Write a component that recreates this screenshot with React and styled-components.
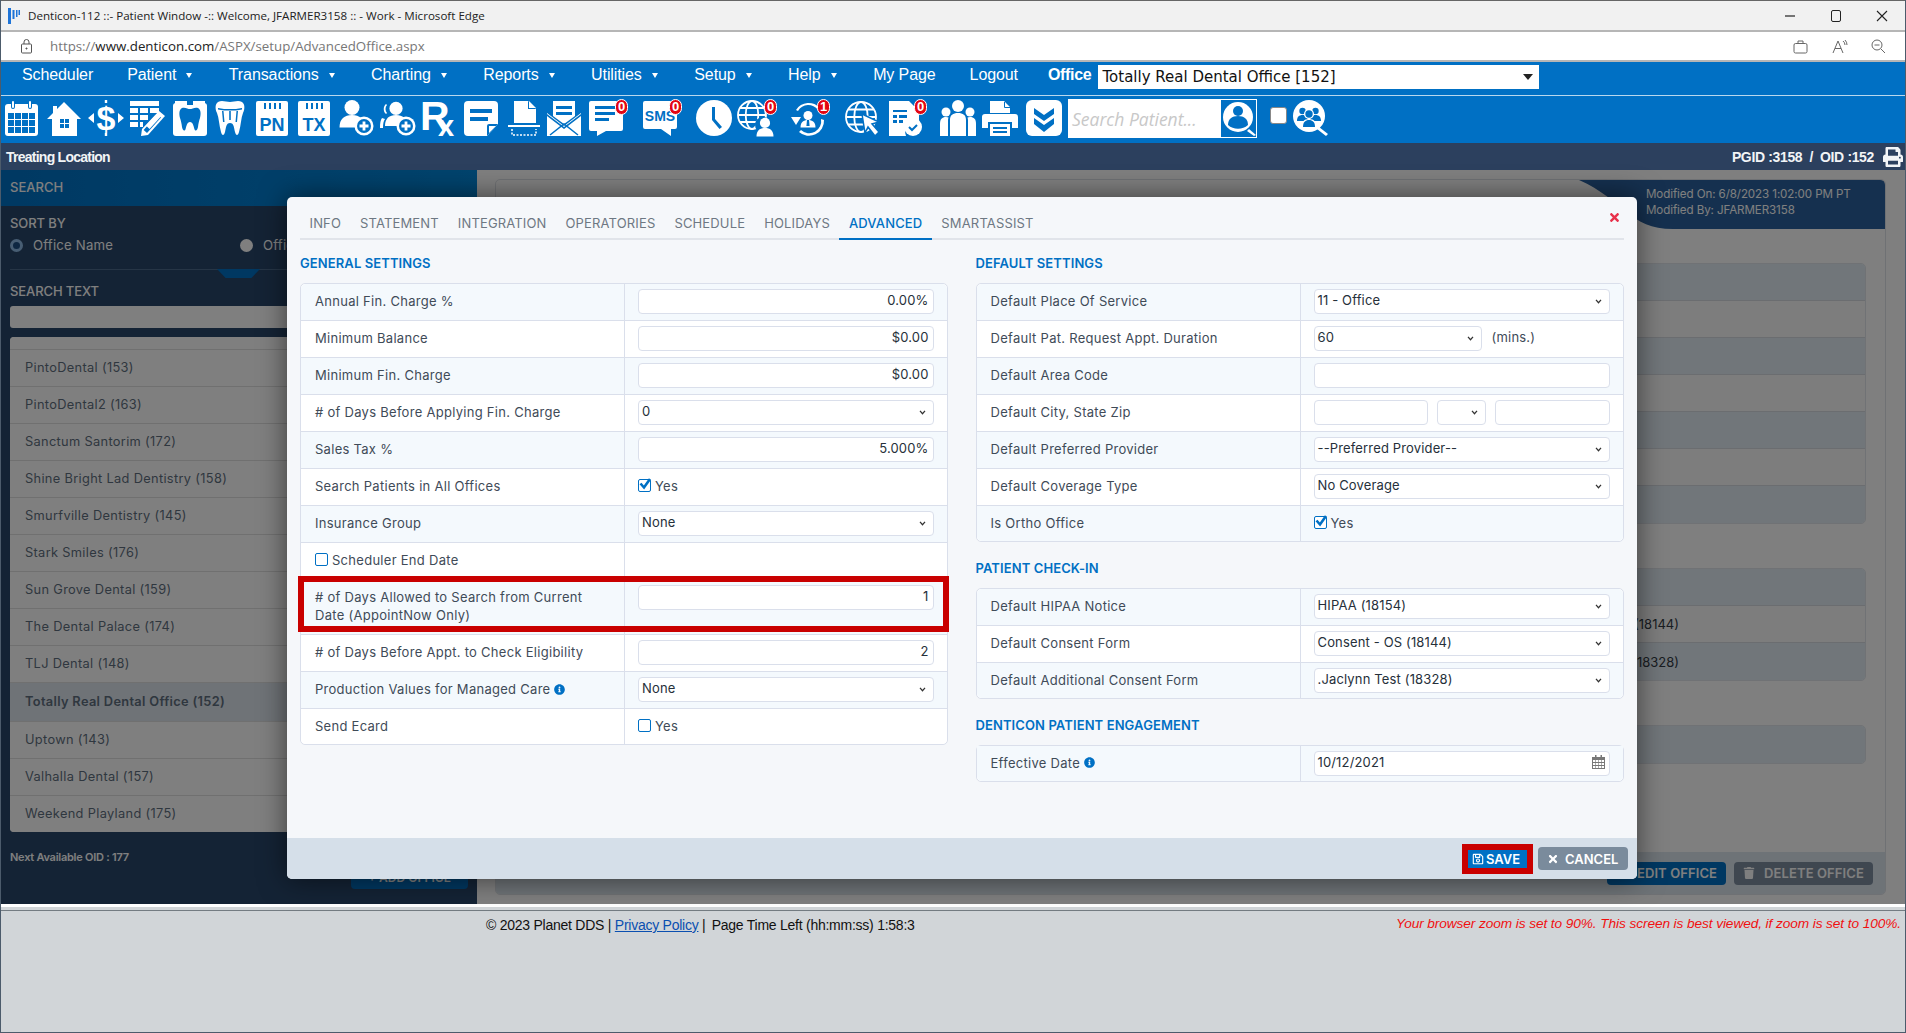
import React from 'react';
import styled, { createGlobalStyle } from 'styled-components';
import { FaInfoCircle, FaRegSave, FaTimes, FaTrash, FaPrint, FaEdit } from 'react-icons/fa';

const BLUE = '#0070c4';
const UI = '"Inter", "Noto Sans", sans-serif';
const ARIAL = '"Liberation Sans", Arial, sans-serif';

const Global = createGlobalStyle`
  html, body { margin: 0; padding: 0; background: #d1d5d8; }
  * { box-sizing: border-box; }
`;

const Page = styled.div`
  width: 1906px; height: 1033px; display: flex; flex-direction: column; overflow: hidden;
  border-left: 1px solid #4c5b6b; border-right: 1px solid #4c5b6b; border-bottom: 1px solid #4c5b6b;
  background: #d1d5d8; font-family: ${UI};
`;

/* browser chrome */
const TitleBar = styled.div`
  height: 32px; flex: none; display: flex; align-items: center; background: #f1f1f1;
  border-top: 1px solid #666; border-bottom: 2px solid #b6b6b6; padding: 0 0 0 7px;
  font: 11.6px "Open Sans", sans-serif; color: #222;
`;
const TitleText = styled.span` margin-left: 8px; flex: 1; `;
const WinBtn = styled.span` width: 46px; height: 16px; display: flex; align-items: center; justify-content: center; color: #222; `;
const AddressBar = styled.div`
  height: 30px; flex: none; display: flex; align-items: center; background: #fff;
  border-bottom: 2px solid #b6b6b6; padding-left: 19px;
  font: 13.3px "Open Sans", sans-serif; color: #777;
`;
const Url = styled.span` margin-left: 17px; flex: 1; b { font-weight: 400; color: #222; } `;
const ChromeIcon = styled.span` width: 39px; display: flex; justify-content: center; color: #666; `;
const ChromeEnd = styled.span` width: 7px; `;

/* blue menu */
const MenuBar = styled.div`
  height: 34px; flex: none; display: flex; align-items: center; background: ${BLUE};
  border-bottom: 1px solid #b9d8ee; padding: 0 0 7px 21px; font: 16px ${ARIAL}; color: #fff;
`;
const MenuItem = styled.span`
  display: flex; align-items: center; gap: 10px; margin-right: ${p => p.$mr}px; white-space: nowrap; letter-spacing: -0.1px;
`;
const Caret = styled.i`
  width: 0; height: 0; border-left: 3px solid transparent; border-right: 3px solid transparent; border-top: 5px solid #fff;
`;
const OfficeLabel = styled.b` font-size: 16px; margin-right: 7px; letter-spacing: -0.3px; `;
const OfficeSelect = styled.div`
  width: 441px; height: 24px; margin-top: 3px; background: #fff; color: #111; display: flex; align-items: center;
  justify-content: space-between; padding: 0 4px; font: 15px "DejaVu Sans", sans-serif;
`;
const OfficeCaret = styled.i`
  width: 0; height: 0; margin-right: 2px; border-left: 5px solid transparent; border-right: 5px solid transparent; border-top: 6px solid #222;
`;

/* icon toolbar */
const Toolbar = styled.div`
  height: 47px; flex: none; display: flex; align-items: flex-start; background: ${BLUE}; padding: 4px 0 0 3px;
`;
const Tool = styled.span` position: relative; width: 36px; height: 36px; flex: none; margin-left: ${p => p.$gap || 0}px; display: block; `;
const Badge = styled.span`
  position: absolute; top: -1px; right: -4px; width: 13px; height: 16px; border-radius: 7px; background: #e30613; color: #fff;
  font: bold 13px/14px ${ARIAL}; text-align: center; border: 1px solid #fff;
`;
const SearchBox = styled.div`
  width: 189px; height: 39px; margin: -1px 0 0 6px; background: #fff; display: flex; align-items: center; justify-content: space-between;
  font: italic 17.5px "Open Sans", sans-serif; color: #c8c8c8; padding-left: 4px; white-space: nowrap;
`;
const SearchBtn = styled.span` width: 37px; height: 39px; background: ${BLUE}; border: 1px solid #fff; display: block; `;
const TopCheck = styled.span` width: 17px; height: 17px; margin: 7px 6px 0 13px; background: #fff; border: 1px solid #888; border-radius: 3px; flex: none; `;

/* status */
const StatusBar = styled.div`
  height: 27px; flex: none; background: #2c405e; color: #f2f4f6; display: flex; align-items: center; justify-content: space-between;
  padding: 0 2px 0 5px; font: bold 14px ${ARIAL}; letter-spacing: -0.35px;
`;
const StatusLeft = styled.span` letter-spacing: -.75px; `;
const StatusRight = styled.div` display: flex; align-items: center; gap: 9px; `;

/* main */
const Main = styled.div` position: relative; height: 734px; flex: none; display: flex; background: #fff; `;
const Backdrop = styled.div` position: absolute; inset: 0; background: rgba(0,0,0,.5); `;

const Sidebar = styled.aside`
  width: 476px; flex: none; background: #28466a; color: #fff; display: flex; flex-direction: column;
  font-size: 13px;
`;
const SideHead = styled.div`
  height: 36px; flex: none; padding: 0 9px 3px; display: flex; align-items: center; font-weight: 500;
  background: linear-gradient(90deg, #0072c6, #0088dc); color: #fff; font-size: 13px;
`;
const SideBody = styled.div` padding: 8px 9px 0; flex: 1; display: flex; flex-direction: column; position: relative; `;
const SideLabel = styled.div`
  font-weight: 500; font-size: 13px; height: 18px; line-height: 18px; letter-spacing: -.1px; margin-top: ${p => p.$mt || 0}px;
`;
const RadioRow = styled.div` display: flex; height: 22px; align-items: center; margin-top: 2px; font-size: 13.2px; letter-spacing: .2px; `;
const Radio = styled.span`
  width: 13px; height: 13px; border-radius: 50%; flex: none; margin-right: 10px;
  background: ${p => p.$on ? '#1c4e84' : '#fff'}; border: ${p => p.$on ? '3.5px solid #8fbbe6' : 'none'};
`;
const RadioText = styled.span` width: ${p => p.$w}px; `;
const Divider = styled.div`
  position: relative; height: 1px; background: #4d6a8c; margin-top: 13px;
  &::after { content: ''; position: absolute; left: 207px; top: 0; width: 43px; height: 9px; background: ${BLUE};
    clip-path: polygon(0 0, 100% 0, 80% 100%, 20% 100%); }
`;
const SearchInput = styled.div` height: 22px; margin-top: 6px; background: #fff; border-radius: 3px; `;
const OfficeList = styled.div`
  margin-top: 9px; height: 495px; background: #fff; border-radius: 4px; overflow: hidden; color: #5f6f7f;
`;
const OfficeRow = styled.div`
  height: ${p => p.$h || 37}px; display: flex; align-items: center; padding: 0 0 2px 15px; border-bottom: 1px solid #e0e0e0; font-size: 12.8px; letter-spacing: .33px;
  background: ${p => p.$active ? '#dfe6ee' : '#fff'}; font-weight: ${p => p.$active ? 600 : 400};
`;
const NextOid = styled.div` margin-top: 18px; font-size: 11px; font-weight: 600; letter-spacing: -.25px; `;
const AddBtn = styled.div`
  position: absolute; left: 350px; bottom: 15px; width: 117px; height: 24px; border-radius: 4px; background: ${BLUE};
  color: #fff; font-size: 12px; font-weight: 600; display: flex; align-items: center; justify-content: center;
`;

const Content = styled.section` flex: 1; padding: 9px 19px 9px 18px; display: flex; `;
const Card = styled.div`
  flex: 1; position: relative; border: 1px solid #dfe3e8; border-radius: 5px; display: flex; flex-direction: column; overflow: hidden;
`;
const Banner = styled.div`
  align-self: flex-end; width: 306px; height: 49px; flex: none; background: #2a619e; color: #fff; padding: 6px 0 0 67px;
  clip-path: path("M0 0H301Q306 0 306 5V49H94C50 49 45 20 0 0Z"); font-size: 11.6px; line-height: 16px; letter-spacing: -.1px;
`;
const BackArea = styled.div` flex: 1; padding: 34px 19px 0 700px; `;
const BackTable = styled.div` border: 1px solid #e0e4ea; border-radius: 5px; margin-bottom: 44px; overflow: hidden; `;
const BackRow = styled.div`
  height: 37px; display: flex; justify-content: flex-end; align-items: center; padding-right: 186px; color: #333a44; font-size: 13px;
  border-bottom: 1px solid #d7dbe0; &:nth-child(odd) { background: #e2edf5; } &:nth-child(even) { background: #fafafa; }
  &:last-child { border-bottom: none; }
`;
const CardFoot = styled.div`
  height: 42px; flex: none; background: #dce6ef; display: flex; justify-content: flex-end; align-items: center; gap: 8px; padding-right: 12px;
`;
const BackBtn = styled.div`
  height: 23px; width: ${p => p.$w}px; border-radius: 4px; background: ${p => p.$bg}; color: #fff; display: flex; align-items: center; justify-content: center; gap: 9px;
  font-size: 13px; font-weight: 600; letter-spacing: .1px;
`;

/* modal */
const Modal = styled.div`
  position: absolute; left: 286px; top: 27px; width: 1350px; height: 682px; background: #f5f7fa; border-radius: 5px;
  box-shadow: 0 0 28px rgba(0,0,0,.55); display: flex; flex-direction: column;
`;
const Close = styled.span` position: absolute; right: 16px; top: 14px; color: #e8314a; font-size: 13px; display: flex; `;
const Tabs = styled.div`
  height: 43px; margin: 0 13px; display: flex; align-items: flex-end; border-bottom: 2px solid #e1e4ea; flex: none;
`;
const Tab = styled.div`
  height: 28px; padding: 0 9.5px 4px; margin-bottom: -2px; font-size: 13px; display: flex; align-items: center;
  letter-spacing: .15px; color: ${p => p.$on ? BLUE : '#6e7883'}; font-weight: ${p => p.$on ? 500 : 400};
  border-bottom: 2px solid ${p => p.$on ? BLUE : 'transparent'};
`;
const Body = styled.div`
  flex: 1; padding: 0 13px; display: grid; grid-template-columns: 647.5px 648.5px; gap: 28px; align-content: start;
`;
const Col = styled.div``;
const SectionTitle = styled.div`
  height: 20px; line-height: 20px; margin: ${p => p.$first ? 13 : 16}px 0 10px; color: ${BLUE}; font-weight: 600; font-size: 13px; letter-spacing: .1px;
`;
const Table = styled.div` border: 1px solid #dadfeb; border-radius: 5px; background: #fff; `;
const Row = styled.div`
  position: relative; display: grid; grid-template-columns: 323px 1fr; min-height: ${p => p.$marked ? 55 : 37}px; border-bottom: 1px solid #dadfeb;
  &:nth-child(odd) { background: #f4f9fd; } &:nth-child(even) { background: #fff; }
  &:last-child { border-bottom: none; min-height: 35px; }
  &:first-child { border-radius: 5px 5px 0 0; } &:last-child { border-radius: 0 0 5px 5px; }
  ${p => p.$marked ? `&::after { content: ''; position: absolute; top: -4px; bottom: 2px; left: -3px; right: -2px; border: 6px solid #c90000; pointer-events: none; }` : ''}
`;
const Label = styled.div`
  padding: 0 13px 2px 14px; display: flex; align-items: center; gap: 4px; font-size: 13px; color: #3f4b58; line-height: 18px; letter-spacing: .28px; white-space: nowrap;
`;
const Value = styled.div`
  border-left: 1px solid #dadfeb; padding: 5px 13px; display: flex; gap: ${p => p.$gap || 0}px; align-items: flex-start; font-size: 13px; color: #3f4b58;
`;
const Field = styled.div`
  height: 25px; flex: ${p => p.$w ? `0 0 ${p.$w}px` : 1}; background: #fff; border: 1px solid #dadfeb; border-radius: 4px; display: flex; align-items: center;
  justify-content: ${p => p.$right ? 'flex-end' : 'space-between'}; padding: 0 4px 3px 3px; color: #26303a; font-size: 13px; letter-spacing: .15px;
`;
const Chevron = styled.svg` width: 7px; height: 5px; margin: 3px 3px 0 0; flex: none; `;
const CheckWrap = styled.label` display: flex; align-items: center; gap: 4px; height: 25px; margin-top: -1px; color: #3f4b58; font-size: 13px; letter-spacing: .28px; `;
const Box = styled.span`
  position: relative; width: 13px; height: 13px; border: 1.5px solid ${BLUE}; border-radius: 2px; background: #fff; flex: none;
`;
const Tick = styled.svg` position: absolute; left: -1px; top: -3px; width: 14px; height: 14px; `;
const Info = styled.span` color: ${BLUE}; font-size: 11px; display: inline-flex; `;
const Mins = styled.span` line-height: 22px; color: #3f4b58; letter-spacing: .2px; `;
const ModalFoot = styled.div`
  height: 41px; flex: none; background: #d5dfe9; border-radius: 0 0 5px 5px; display: flex; justify-content: flex-end; align-items: center; gap: 11px; padding: 0 9px 0 0;
`;
const SaveBtn = styled.div`
  width: 59px; height: 18px; background: ${BLUE}; outline: 6px solid #c90000; color: #fff; font-size: 13px; font-weight: 600; display: flex; align-items: center; gap: 2px;
  padding-left: 4px;
`;
const CancelBtn = styled.div`
  width: 90px; height: 23px; border-radius: 4px; background: #7a8b9c; color: #fff; font-size: 13px; font-weight: 600; display: flex; align-items: center; padding-left: 9px; gap: 6px;
`;

/* page footer */
const Strip = styled.div` height: 3px; flex: none; background: #fff; `;
const PageFoot = styled.footer`
  flex: 1; margin-top: 3px; border-top: 1px solid #747c82; background: #d1d5d8; display: flex; justify-content: space-between; padding: 6px 4px 0 485px;
  font: 14px ${ARIAL}; color: #111; letter-spacing: -.25px;
`;
const Link = styled.a` color: #0a4fb0; text-decoration: underline; `;
const Warn = styled.em` color: #f01010; font-size: 13.7px; letter-spacing: -.1px; margin-top: -1px; `;

const Sv = ({ children }) => (
  <svg width="36" height="36" viewBox="0 0 36 36" fill="#fff" overflow="visible" xmlns="http://www.w3.org/2000/svg">{children}</svg>
);
const Person = ({ x, y, s = 1, fill = '#fff' }) => (
  <g transform={`translate(${x} ${y}) scale(${s})`} fill={fill}>
    <circle cx="0" cy="-6" r="6" />
    <path d="M-10 10c0-7 4-10 10-10s10 3 10 10z" />
  </g>
);
const PlusBadge = () => (
  <g>
    <circle cx="26" cy="26" r="9.5" fill="#fff" />
    <circle cx="26" cy="26" r="7" fill={BLUE} />
    <path d="M24.6 21.5h2.8v3.1h3.1v2.8h-3.1v3.1h-2.8v-3.1h-3.1v-2.8h3.1z" fill="#fff" />
  </g>
);
const DocTicks = () => (
  <g fill={BLUE}>{[10, 15, 20, 25].map(x => <rect key={x} x={x} y="3" width="2" height="6" />)}</g>
);
const Globe = ({ cx = 17, cy = 17, r = 15 }) => (
  <g fill="none" stroke="#fff" strokeWidth="1.8">
    <circle cx={cx} cy={cy} r={r} />
    <ellipse cx={cx} cy={cy} rx={r * 0.45} ry={r} />
    <path d={`M${cx - r} ${cy}h${2 * r}M${cx - r * .85} ${cy - r * .5}h${1.7 * r}M${cx - r * .85} ${cy + r * .5}h${1.7 * r}`} />
  </g>
);

const icons = {
  calendar: <Sv>
    <rect x="1" y="4" width="33" height="32" rx="3" />
    <g fill={BLUE}>
      {[0, 1, 2, 3].map(c => [0, 1, 2].map(r => <rect key={`${c}${r}`} x={4 + c * 7} y={13 + r * 7} width="6" height="6" />))}
      <rect x="7" y="0" width="4" height="9" rx="2" /><rect x="24" y="0" width="4" height="9" rx="2" />
    </g>
    <rect x="8" y="1" width="2" height="7" rx="1" /><rect x="25" y="1" width="2" height="7" rx="1" />
  </Sv>,
  home: <Sv>
    <path d="M18 2 35 19h-4v17H6V19H1l6-6V6h4v3z" />
    <path d="M14 19h4v4h-4zM19 19h4v4h-4zM14 24h4v4h-4zM19 24h4v4h-4z" fill={BLUE} />
  </Sv>,
  dollar: <Sv>
    <text x="18" y="30" textAnchor="middle" fontFamily="Liberation Sans" fontWeight="700" fontSize="34">$</text>
    <path d="M0 18l6-5v10zM36 18l-6-5v10zM16.800 0h2.400v3h-2.400zM16.800 33h2.400v3h-2.400z" />
  </Sv>,
  ledger: <Sv>
    <path d="M1 1h29v5H1zM1 8h8v5H1zM11 8h8v5h-8zM21 8h9v5h-9zM1 15h8v5H1zM11 15h8v5h-8zM1 22h8v5H1zM11 22h3v5h-3z" />
    <path d="M30 11l6 5-17 19-7 1 1-7z" /><path d="M28.500 14.500l3.500 3-14 15.500-3.400-3z" fill={BLUE} /><path d="M17 25.500l13-14 3.500 3.200-13 14.300z" />
  </Sv>,
  tooth: <Sv>
    <rect x="1" y="3" width="34" height="33" rx="3" />
    <path d="M3 1h12v3H3zM21 1h12v3H21z" />
    <path d="M15 1h6v4h-6z" fill={BLUE} />
    <path d="M10 8c3-1.200 6 1 8 1s5-2.200 8-1c3 1.500 3 6 2 10-1 3-1.500 5-2 9-.4 3-2.600 5-3.600 2-.8-2.500-1.400-7-4.400-7s-3.600 4.500-4.400 7c-1 3-3.200 1-3.600-2-.5-4-1-6-2-9C7 14 7 9.500 10 8z" fill={BLUE} />
  </Sv>,
  crown: <Sv>
    <path d="M6 2c4-2 8 0 12 0s8-2 12 0c3 2 3 7 1 11-2 5-2 12-4 19-1 4-3 4-4 0-1-4-1-9-5-9s-4 5-5 9c-1 4-3 4-4 0-2-7-2-14-4-19C3 9 3 4 6 2z" />
    <path d="M6 8c4 1 8 1 12 1s8 0 12-1v1.500c-4 1-8 1-12 1s-8 0-12-1z" fill={BLUE} />
    <path d="M10 11h1.500l1 11h-1.500zM17.200 11h1.600v9h-1.600zM24.500 11h1.500l-1 11h-1.500z" fill={BLUE} />
  </Sv>,
  pn: <Sv>
    <rect x="2" y="1" width="32" height="35" rx="2" /><DocTicks />
    <text x="18" y="31" textAnchor="middle" fontFamily="Liberation Sans" fontWeight="700" fontSize="18" fill={BLUE}>PN</text>
  </Sv>,
  tx: <Sv>
    <rect x="2" y="1" width="32" height="35" rx="2" /><DocTicks />
    <text x="18" y="31" textAnchor="middle" fontFamily="Liberation Sans" fontWeight="700" fontSize="18" fill={BLUE}>TX</text>
  </Sv>,
  userPlus: <Sv><Person x={14} y={15} s={1.25} /><PlusBadge /></Sv>,
  usersPlus: <Sv>
    <Person x={16} y={15} s={1.1} />
    <path d="M6 4c-3 2-3 8 0 10l1-1c-2-2-2-6 0-8zM2 18c-1.500 2-2 5-2 10h3c0-4 .5-7 2-9z" />
    <PlusBadge />
  </Sv>,
  rx: <Sv>
    <text x="-1" y="30" fontFamily="Liberation Sans" fontWeight="700" fontSize="41">R<tspan dx="-11.600" dy="6" fontSize="29">x</tspan></text>
  </Sv>,
  note: <Sv>
    <path d="M5 1h26a4 4 0 014 4v19L24 36H5a4 4 0 01-4-4V5a4 4 0 014-4z" />
    <path d="M7 9h22v4H7zM7 17h18v4H7z" fill={BLUE} />
    <path d="M35 24H26a2 2 0 00-2 2v10z" fill={BLUE} /><path d="M33 26l-7 7v-7z" />
  </Sv>,
  scanner: <Sv>
    <path d="M8 1h14l8 8v14H8z" /><path d="M22 1v8h8z" fill={BLUE} /><path d="M23 1l7 7h-7z" />
    <path d="M2 25h32v2H2z" />
    <path d="M6 29v6h24v-6" fill="none" stroke="#fff" strokeWidth="1.500" strokeDasharray="2 1.500" />
  </Sv>,
  mail: <Sv>
    <path d="M7 1h22v15l-11 8-11-8z" />
    <path d="M10 6h16v3H10zM10 12h16v3H10z" fill={BLUE} />
    <path d="M1 13l17 13 17-13v23H1z" />
    <path d="M1 14l17 13 17-13v2L18 29 1 16z" fill={BLUE} />
    <path d="M4 35l14-11 14 11" fill="none" stroke={BLUE} strokeWidth="1.500" />
  </Sv>,
  chat: <Sv>
    <path d="M3 1h30a2 2 0 012 2v26a2 2 0 01-2 2H18l-9 5v-5H3a2 2 0 01-2-2V3a2 2 0 012-2z" />
    <path d="M7 6h20v3H7zM7 12h20v3H7zM7 18h14v3H7z" fill={BLUE} />
  </Sv>,
  sms: <Sv>
    <path d="M3 1h30a2 2 0 012 2v24a2 2 0 01-2 2h-4v7l-10-7H3a2 2 0 01-2-2V3a2 2 0 012-2z" />
    <text x="18" y="21" textAnchor="middle" fontFamily="Liberation Sans" fontWeight="700" fontSize="14" fill={BLUE}>SMS</text>
  </Sv>,
  clock: <Sv><circle cx="18" cy="18" r="18" /><path d="M16 7h3v12l7 8-2.500 2-7.500-9z" fill={BLUE} /></Sv>,
  globeUser: <Sv><Globe cx={15} cy={15} r={14} /><circle cx="26" cy="25" r="8" fill={BLUE} /><Person x={28} y={28} s={.85} /></Sv>,
  refresh: <Sv>
    <path d="M6 10a15 15 0 0124-2l-2 2A12 12 0 008 11z" /><path d="M34 20a15 15 0 01-25 12l2-2a12 12 0 0020-11z" />
    <path d="M1 17h10l-5 8zM28 5l5-3 1 7z" />
    <Person x={18} y={20} s={.75} /><path d="M17 20h2l.6 6h-3.200z" fill={BLUE} />
  </Sv>,
  globeCursor: <Sv><Globe cx={16} cy={17} r={15} /><path d="M17 14l17 8-7 2 7 8-4 4-7-9-3 6z" stroke={BLUE} strokeWidth="1.500" /></Sv>,
  docCheck: <Sv>
    <path d="M2 1h20l10 10v12a10 10 0 00-13 13H2z" />
    <path d="M6 10h14v2H6zM6 15h4v3H6zM12 15h8v3h-8zM6 20h4v3H6zM12 20h4v3h-4z" fill={BLUE} />
    <circle cx="26" cy="27" r="9" /><path d="M22 27l3 3 5-5" fill="none" stroke={BLUE} strokeWidth="2" />
  </Sv>,
  people: <Sv>
    <circle cx="18" cy="6" r="6" /><circle cx="6" cy="12" r="4.500" /><circle cx="30" cy="12" r="4.500" />
    <path d="M10 36V20c0-5 3-7 8-7s8 2 8 7v16zM0 36V24c0-5 2-7 6-7 1 0 2 .2 2.500.5-.4 1-.5 2-.5 3V36zM36 36V24c0-5-2-7-6-7-1 0-2 .2-2.500.5.4 1 .5 2 .5 3V36z" />
  </Sv>,
  printer: <Sv>
    <path d="M8 1h14l6 6v6H8zM23 2l4 5h-4z" /><path d="M22.500 2v5.500H28" fill="none" stroke={BLUE} />
    <path d="M3 14h30a3 3 0 013 3v11h-6v-6H6v6H0V17a3 3 0 013-3z" />
    <path d="M8 24h20v12H8z" /><path d="M11 27h14v2H11zM11 31h14v2H11z" fill={BLUE} />
  </Sv>,
  chevrons: <Sv>
    <rect x="0" y="0" width="36" height="36" rx="6" />
    <path d="M8 8l10 7 10-7v6l-10 7-10-7zM8 18l10 7 10-7v6l-10 8-10-8z" fill={BLUE} />
  </Sv>,
  findUser: <Sv>
    <circle cx="17" cy="17" r="15" />
    <circle cx="17" cy="11" r="5" fill={BLUE} /><path d="M7 25c0-6 4-9 10-9s10 3 10 9a15 15 0 01-20 0z" fill={BLUE} />
    <path d="M28 29l7 6-2 1-7-5z" />
  </Sv>,
  findGroup: <Sv>
    <ellipse cx="16" cy="16" rx="16" ry="16" /><path d="M26 27l9 7-2 2-9-7z" />
    <g fill={BLUE}>
      <circle cx="9.500" cy="11" r="3.200" /><circle cx="22.500" cy="11" r="3.200" />
      <path d="M4 21c0-4 2-6 5.500-6S15 17 15 21zM17 21c0-4 2-6 5.500-6s5.500 2 5.500 6z" />
    </g>
    <circle cx="16" cy="14" r="5" /><path d="M8 29c0-7 3-10 8-10s8 3 8 10z" />
    <g fill={BLUE}>
      <circle cx="16" cy="14" r="3.700" /><path d="M10 27c0-5 2.500-7 6-7s6 2 6 7z" />
    </g>
  </Sv>,
};

const toolbar = [
  ['calendar', 0], ['home', 6], ['dollar', 6], ['ledger', 5], ['tooth', 7], ['crown', 4], ['pn', 6], ['tx', 6],
  ['userPlus', 6], ['usersPlus', 6], ['rx', 5], ['note', 6], ['scanner', 7], ['mail', 4], ['chat', 6, 0],
  ['sms', 18, 0], ['clock', 18], ['globeUser', 5, 0], ['refresh', 17, 1], ['globeCursor', 19], ['docCheck', 6, 0],
  ['people', 17], ['printer', 6], ['chevrons', 8],
];

const menu = [
  ['Scheduler', 0, 34], ['Patient', 1, 36.5], ['Transactions', 1, 36.5], ['Charting', 1, 36.5], ['Reports', 1, 36.5], ['Utilities', 1, 36.5],
  ['Setup', 1, 36.5], ['Help', 1, 36.5], ['My Page', 0, 34], ['Logout', 0, 30],
];

const offices = [
  'PintoDental (153)', 'PintoDental2 (163)', 'Sanctum Santorim (172)', 'Shine Bright Lad Dentistry (158)', 'Smurfville Dentistry (145)',
  'Stark Smiles (176)', 'Sun Grove Dental (159)', 'The Dental Palace (174)', 'TLJ Dental (148)',
];

const tabs = ['INFO', 'STATEMENT', 'INTEGRATION', 'OPERATORIES', 'SCHEDULE', 'HOLIDAYS', 'ADVANCED', 'SMARTASSIST'];

const Select = ({ children, w }) => (
  <Field $w={w}>
    <span>{children}</span>
    <Chevron viewBox="0 0 8 6"><path d="M1 1l3 3.500L7 1" fill="none" stroke="#333" strokeWidth="1.500" /></Chevron>
  </Field>
);
const Check = ({ on, children }) => (
  <CheckWrap>
    <Box>{on && <Tick viewBox="0 0 14 14"><path d="M2.500 6.500l3.500 4L12 2" fill="none" stroke={BLUE} strokeWidth="2.600" /></Tick>}</Box>
    {children}
  </CheckWrap>
);
const CalendarSmall = () => (
  <svg width="13" height="14" viewBox="0 0 13 14"><path d="M0 2h13v12H0z" fill="#777" /><path d="M1 5h2.400v2H1zM4 5h2.400v2H4zM7 5h2.400v2H7zM10 5h2v2h-2zM1 8h2.400v2H1zM4 8h2.400v2H4zM7 8h2.400v2H7zM10 8h2v2h-2zM1 11h2.400v2H1zM4 11h2.400v2H4zM7 11h2.400v2H7zM10 11h2v2h-2z" fill="#fff" /><path d="M3 0h1.500v3H3zM8.500 0H10v3H8.500z" fill="#777" /></svg>
);

const Item = ({ label, children, gap }) => (
  <Row>
    <Label>{label}</Label>
    <Value $gap={gap}>{children}</Value>
  </Row>
);
const Num = ({ children }) => <Field $right>{children}</Field>;
const InfoDot = () => <Info><FaInfoCircle /></Info>;

export default function App() {
  return (
    <Page>
      <Global />
      <TitleBar>
        <svg width="12" height="18" viewBox="0 0 12 18"><path d="M0 1h3v16H0zM4.500 3H6.500v9H4.500zM8 3h1.500v7H8zM10.500 3H12v5h-1.500z" fill="#1e74d8" /></svg>
        <TitleText>Denticon-112 ::- Patient Window -:: Welcome, JFARMER3158 :: - Work - Microsoft Edge</TitleText>
        <WinBtn><svg width="12" height="12" viewBox="0 0 12 12"><path d="M1 6h10" stroke="#222" strokeWidth="1.200" /></svg></WinBtn>
        <WinBtn><svg width="12" height="12" viewBox="0 0 12 12"><rect x="1.500" y=".5" width="9" height="11" rx="1.500" fill="none" stroke="#222" /></svg></WinBtn>
        <WinBtn><svg width="12" height="12" viewBox="0 0 12 12"><path d="M1 1l10 10M11 1L1 11" stroke="#222" strokeWidth="1.100" /></svg></WinBtn>
      </TitleBar>
      <AddressBar>
        <svg width="13" height="15" viewBox="0 0 13 15" fill="none" stroke="#555"><rect x="1.500" y="5" width="10" height="9" rx="1" /><path d="M4 5V3a2.500 2.500 0 015 0v2" /><circle cx="6.500" cy="9.500" r=".6" fill="#555" /></svg>
        <Url>https://<b>www.denticon.com</b>/ASPX/setup/AdvancedOffice.aspx</Url>
        <ChromeIcon><svg width="15" height="15" viewBox="0 0 15 15" fill="none" stroke="#666"><rect x="1" y="4.500" width="13" height="9.500" rx="1.500" /><path d="M5 4.500V2h5v2.500" /></svg></ChromeIcon>
        <ChromeIcon><svg width="16" height="15" viewBox="0 0 16 15" fill="none" stroke="#666"><path d="M1 14L6 2l5 12M3 9.500h6M11 2a5 5 0 012 4M13 1a7 7 0 012 5" /></svg></ChromeIcon>
        <ChromeIcon><svg width="15" height="15" viewBox="0 0 15 15" fill="none" stroke="#666"><circle cx="6" cy="6" r="5" /><path d="M3.500 6h5M10 10l4 4" /></svg></ChromeIcon>
        <ChromeEnd />
      </AddressBar>

      <MenuBar>
        {menu.map(([t, c, m]) => <MenuItem key={t} $mr={m}>{t}{c ? <Caret /> : null}</MenuItem>)}
        <OfficeLabel>Office</OfficeLabel>
        <OfficeSelect>Totally Real Dental Office [152]<OfficeCaret /></OfficeSelect>
      </MenuBar>

      <Toolbar>
        {toolbar.map(([k, g, b]) => (
          <Tool key={k} $gap={g}>{icons[k]}{b !== undefined && <Badge>{b}</Badge>}</Tool>
        ))}
        <SearchBox>Search Patient...<SearchBtn>{icons.findUser}</SearchBtn></SearchBox>
        <TopCheck />
        <Tool>{icons.findGroup}</Tool>
      </Toolbar>

      <StatusBar>
        <StatusLeft>Treating Location</StatusLeft>
        <StatusRight>
          <span>PGID :3158&nbsp; /&nbsp; OID :152</span>
          <FaPrint size={20} />
        </StatusRight>
      </StatusBar>

      <Main>
        <Sidebar>
          <SideHead>SEARCH</SideHead>
          <SideBody>
            <SideLabel>SORT BY</SideLabel>
            <RadioRow>
              <Radio $on /><RadioText $w={207}>Office Name</RadioText>
              <Radio /><RadioText $w={100}>Office ID</RadioText>
            </RadioRow>
            <Divider />
            <SideLabel $mt={12}>SEARCH TEXT</SideLabel>
            <SearchInput />
            <OfficeList>
              <OfficeRow $h={13} />
              {offices.map(o => <OfficeRow key={o}>{o}</OfficeRow>)}
              <OfficeRow $h={39} $active>Totally Real Dental Office (152)</OfficeRow>
              <OfficeRow>Uptown (143)</OfficeRow>
              <OfficeRow>Valhalla Dental (157)</OfficeRow>
              <OfficeRow>Weekend Playland (175)</OfficeRow>
            </OfficeList>
            <NextOid>Next Available OID : 177</NextOid>
            <AddBtn>+ ADD OFFICE</AddBtn>
          </SideBody>
        </Sidebar>
        <Content>
          <Card>
            <Banner>Modified On: 6/8/2023 1:02:00 PM PT<br />Modified By: JFARMER3158</Banner>
            <BackArea>
              <BackTable>{Array.from({ length: 7 }, (_, i) => <BackRow key={i} />)}</BackTable>
              <BackTable>
                <BackRow />
                <BackRow>(18144)</BackRow>
                <BackRow>(18328)</BackRow>
              </BackTable>
              <BackTable><BackRow /></BackTable>
            </BackArea>
            <CardFoot>
              <BackBtn $w={119} $bg={BLUE}><FaEdit size={12} />EDIT OFFICE</BackBtn>
              <BackBtn $w={139} $bg="#7e8ea0"><FaTrash size={12} />DELETE OFFICE</BackBtn>
            </CardFoot>
          </Card>
        </Content>
        <Backdrop />

        <Modal>
          <Close><FaTimes /></Close>
          <Tabs>
            {tabs.map(t => <Tab key={t} $on={t === 'ADVANCED'}>{t}</Tab>)}
          </Tabs>
          <Body>
            <Col>
              <SectionTitle $first>GENERAL SETTINGS</SectionTitle>
              <Table>
                <Item label="Annual Fin. Charge %"><Num>0.00%</Num></Item>
                <Item label="Minimum Balance"><Num>$0.00</Num></Item>
                <Item label="Minimum Fin. Charge"><Num>$0.00</Num></Item>
                <Item label="# of Days Before Applying Fin. Charge"><Select>0</Select></Item>
                <Item label="Sales Tax %"><Num>5.000%</Num></Item>
                <Item label="Search Patients in All Offices"><Check on>Yes</Check></Item>
                <Item label="Insurance Group"><Select>None</Select></Item>
                <Row>
                  <Label><Check>Scheduler End Date</Check></Label>
                  <Value />
                </Row>
                <Row $marked>
                  <Label><span># of Days Allowed to Search from Current<br />Date (AppointNow Only)</span></Label>
                  <Value><Num>1</Num></Value>
                </Row>
                <Item label="# of Days Before Appt. to Check Eligibility"><Num>2</Num></Item>
                <Item label={<>Production Values for Managed Care <InfoDot /></>}><Select>None</Select></Item>
                <Item label="Send Ecard"><Check>Yes</Check></Item>
              </Table>
            </Col>
            <Col>
              <SectionTitle $first>DEFAULT SETTINGS</SectionTitle>
              <Table>
                <Item label="Default Place Of Service"><Select>11 - Office</Select></Item>
                <Item label="Default Pat. Request Appt. Duration" gap={10}><Select w={168}>60</Select><Mins>(mins.)</Mins></Item>
                <Item label="Default Area Code"><Field /></Item>
                <Item label="Default City, State Zip" gap={9}><Field $w={114} /><Select w={49} /><Field /></Item>
                <Item label="Default Preferred Provider"><Select>--Preferred Provider--</Select></Item>
                <Item label="Default Coverage Type"><Select>No Coverage</Select></Item>
                <Item label="Is Ortho Office"><Check on>Yes</Check></Item>
              </Table>
              <SectionTitle>PATIENT CHECK-IN</SectionTitle>
              <Table>
                <Item label="Default HIPAA Notice"><Select>HIPAA (18154)</Select></Item>
                <Item label="Default Consent Form"><Select>Consent - OS (18144)</Select></Item>
                <Item label="Default Additional Consent Form"><Select>.Jaclynn Test (18328)</Select></Item>
              </Table>
              <SectionTitle>DENTICON PATIENT ENGAGEMENT</SectionTitle>
              <Table>
                <Item label={<>Effective Date <InfoDot /></>}><Field><span>10/12/2021</span><CalendarSmall /></Field></Item>
              </Table>
            </Col>
          </Body>
          <ModalFoot>
            <SaveBtn><FaRegSave size={12} />SAVE</SaveBtn>
            <CancelBtn><FaTimes size={12} />CANCEL</CancelBtn>
          </ModalFoot>
        </Modal>
      </Main>
      <Strip />
      <PageFoot>
        <span>© 2023 Planet DDS | <Link>Privacy Policy</Link> |{'\u2009'} Page Time Left (hh:mm:ss) 1:58:3</span>
        <Warn>Your browser zoom is set to 90%. This screen is best viewed, if zoom is set to 100%.</Warn>
      </PageFoot>
    </Page>
  );
}
